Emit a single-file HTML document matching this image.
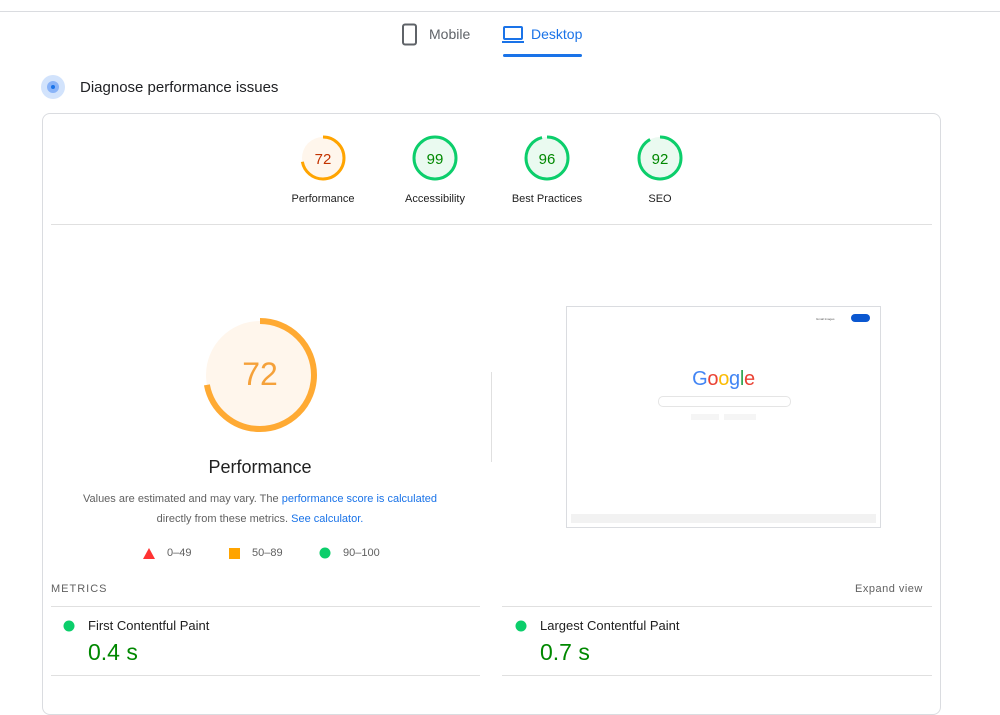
<!DOCTYPE html>
<html><head><style>
body{margin:0;width:1000px;height:685px;background:#fff;font-family:"Liberation Sans",Arial,sans-serif;position:relative;overflow:hidden;color:#212121}
.a{position:absolute}
.lbl{font-size:11px;color:#212121;text-align:center;width:110px}
.link{color:#1a73e8}
</style></head><body>
<div class="a" style="left:0;top:11px;width:1000px;height:1px;background:#dadce0"></div>
<svg class="a" style="left:401px;top:23px" width="18" height="24" viewBox="0 0 18 24"><rect x="2" y="1.5" width="13" height="20" rx="2" fill="none" stroke="#5f6368" stroke-width="2"/></svg>
<div class="a" style="left:429px;top:26px;font-size:14px;color:#5f6368">Mobile</div>
<svg class="a" style="left:502px;top:26px" width="22" height="18" viewBox="0 0 22 18"><rect x="2" y="1" width="18" height="12" rx="1" fill="none" stroke="#1a73e8" stroke-width="2"/><rect x="0" y="15" width="22" height="2" fill="#1a73e8"/></svg>
<div class="a" style="left:531px;top:26px;font-size:14px;color:#1a73e8">Desktop</div>
<div class="a" style="left:503px;top:54px;width:79px;height:3px;border-radius:2px;background:#1a73e8"></div>

<div class="a" style="left:41px;top:75px;width:24px;height:24px;border-radius:50%;background:#d2e3fc"></div>
<div class="a" style="left:47px;top:81px;width:12px;height:12px;border-radius:50%;background:#8ab4f8"></div>
<div class="a" style="left:51px;top:85px;width:4px;height:4px;border-radius:50%;background:#1a73e8"></div>
<div class="a" style="left:80px;top:79px;font-size:15px;color:#202124">Diagnose performance issues</div>

<div class="a" style="left:42px;top:113px;width:897px;height:600px;border:1px solid #dadce0;border-radius:8px"></div>

<svg class="a" style="left:0;top:0" width="1000" height="685">
<g fill="none" stroke-width="3">
<circle cx="323" cy="158" r="21" fill="#fff6ec" stroke="none"/>
<circle cx="323" cy="158" r="21" stroke="#ffa400" stroke-dasharray="95 200" transform="rotate(-90 323 158)"/>
<circle cx="435" cy="158" r="21" fill="#eafaf0" stroke="#0cce6b"/>
<circle cx="547" cy="158" r="21" fill="#eafaf0" stroke="#0cce6b" stroke-dasharray="126.7 200" transform="rotate(-90 547 158)"/>
<circle cx="660" cy="158" r="21" fill="#eafaf0" stroke="#0cce6b" stroke-dasharray="121.4 200" transform="rotate(-90 660 158)"/>
<circle cx="260" cy="375" r="54" fill="#fff6ec" stroke="none"/>
<circle cx="260" cy="375" r="54" stroke="#ffaa33" stroke-width="6" stroke-dasharray="244.3 400" transform="rotate(-90 260 375)"/>
</g>
<g font-family="Liberation Sans,Arial,sans-serif" text-anchor="middle" font-size="15">
<text x="323" y="164" fill="#c33300">72</text>
<text x="435" y="164" fill="#008800">99</text>
<text x="547" y="164" fill="#008800">96</text>
<text x="660" y="164" fill="#008800">92</text>
<text x="260" y="385" fill="#f5a13a" font-size="32">72</text>
</g>
<polygon points="149,548 155,559 143,559" fill="#ff3333"/>
<rect x="229" y="548" width="11" height="11" fill="#ffa400"/>
<circle cx="325" cy="553" r="5.5" fill="#0cce6b"/>
<circle cx="69" cy="626" r="5.5" fill="#0cce6b"/>
<circle cx="521" cy="626" r="5.5" fill="#0cce6b"/>
</svg>
<div class="a lbl" style="left:268px;top:193px">Performance</div>
<div class="a lbl" style="left:380px;top:193px">Accessibility</div>
<div class="a lbl" style="left:492px;top:193px">Best Practices</div>
<div class="a lbl" style="left:605px;top:193px">SEO</div>
<div class="a" style="left:51px;top:224px;width:881px;height:1px;background:#e0e0e0"></div>

<div class="a" style="left:160px;top:457px;width:200px;text-align:center;font-size:18px;color:#212121">Performance</div>
<div class="a" style="left:60px;top:489px;width:400px;text-align:center;font-size:11px;line-height:20px;color:#616161">Values are estimated and may vary. The <span class="link">performance score is calculated</span><br>directly from these metrics. <span class="link">See calculator.</span></div>
<div class="a" style="left:167px;top:547px;font-size:11px;color:#616161">0–49</div>
<div class="a" style="left:252px;top:547px;font-size:11px;color:#616161">50–89</div>
<div class="a" style="left:343px;top:547px;font-size:11px;color:#616161">90–100</div>

<div class="a" style="left:491px;top:372px;width:1px;height:90px;background:#e0e0e0"></div>
<div class="a" style="left:566px;top:306px;width:313px;height:220px;border:1px solid #dadce0;background:#fff">
 <div class="a" style="left:249px;top:10px;font-size:3px;color:#555">Gmail Images</div>
 <div class="a" style="left:284px;top:7px;width:19px;height:8px;border-radius:4px;background:#0b57d0"></div>
 <div class="a" style="left:0;top:61px;width:313px;text-align:center;font-size:20px;letter-spacing:-0.3px"><span style="color:#4285f4">G</span><span style="color:#ea4335">o</span><span style="color:#fbbc05">o</span><span style="color:#4285f4">g</span><span style="color:#34a853">l</span><span style="color:#ea4335">e</span></div>
 <div class="a" style="left:91px;top:89px;width:131px;height:9px;border:1px solid #e5e5e5;border-radius:5px"></div>
 <div class="a" style="left:124px;top:107px;width:28px;height:6px;background:#f5f5f5"></div>
 <div class="a" style="left:157px;top:107px;width:32px;height:6px;background:#f5f5f5"></div>
 <div class="a" style="left:4px;top:207px;width:305px;height:9px;background:#f2f2f2"></div>
</div>

<div class="a" style="left:51px;top:583px;font-size:11px;letter-spacing:1px;color:#616161">METRICS</div>
<div class="a" style="left:855px;top:583px;font-size:11px;letter-spacing:0.5px;color:#616161">Expand view</div>
<div class="a" style="left:51px;top:606px;width:429px;height:1px;background:#e0e0e0"></div>
<div class="a" style="left:502px;top:606px;width:430px;height:1px;background:#e0e0e0"></div>
<div class="a" style="left:88px;top:618px;font-size:13px;color:#212121">First Contentful Paint</div>
<div class="a" style="left:88px;top:639px;font-size:23px;color:#008800">0.4 s</div>
<div class="a" style="left:540px;top:618px;font-size:13px;color:#212121">Largest Contentful Paint</div>
<div class="a" style="left:540px;top:639px;font-size:23px;color:#008800">0.7 s</div>
<div class="a" style="left:51px;top:675px;width:429px;height:1px;background:#e0e0e0"></div>
<div class="a" style="left:502px;top:675px;width:430px;height:1px;background:#e0e0e0"></div>
</body></html>
